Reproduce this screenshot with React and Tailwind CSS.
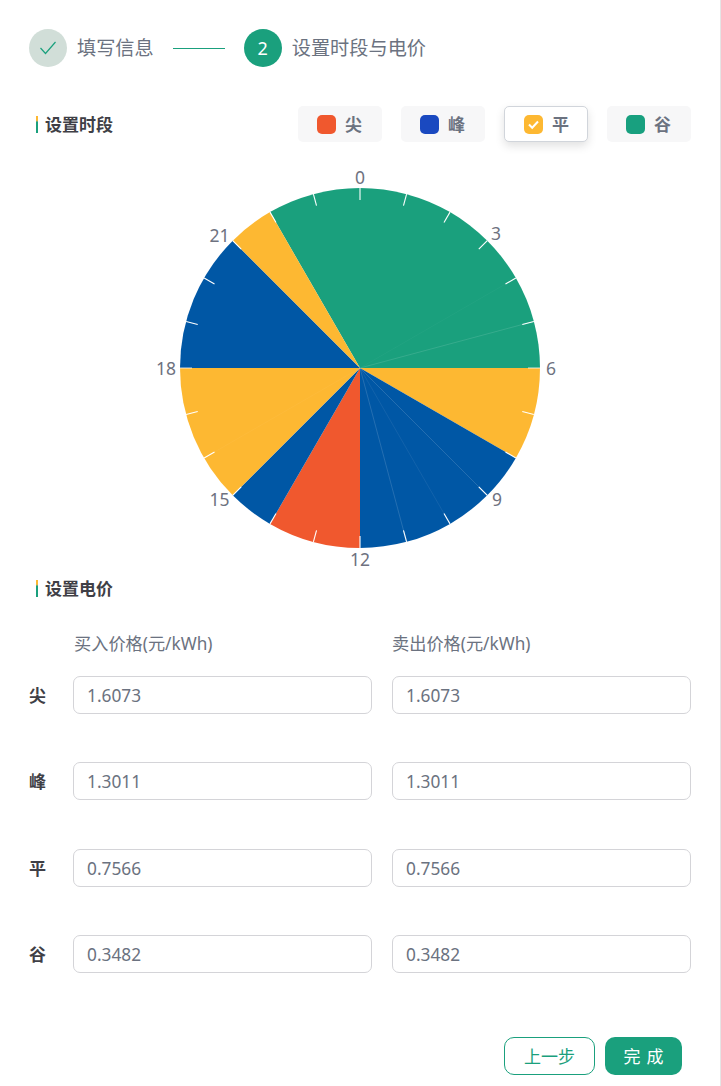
const CJK = '"Noto Sans", "Noto Sans CJK SC", sans-serif';

const C = 360, Y = 368, R = 180;
const pt = (deg, r) => {
  const a = (deg * Math.PI) / 180;
  return [C + r * Math.sin(a), Y - r * Math.cos(a)];
};
const sector = (a, b) => {
  const [x1, y1] = pt(a, R);
  const [x2, y2] = pt(b, R);
  return `M${C} ${Y}L${x1} ${y1}A${R} ${R} 0 ${b - a > 180 ? 1 : 0} 1 ${x2} ${y2}Z`;
};

const GREEN = '#1aa07d', YELLOW = '#fdb832', BLUE = '#0057a5', RED = '#f0582e';
const sectors = [
  [-30, 90, GREEN],
  [90, 120, YELLOW],
  [120, 180, BLUE],
  [180, 210, RED],
  [210, 225, BLUE],
  [225, 270, YELLOW],
  [270, 315, BLUE],
  [315, 330, YELLOW],
];
const seams = [[60, 0.03], [75, 0.12], [135, 0.14], [150, 0.07], [165, 0.14], [240, 0.04]];
const labels = [
  ['0', 360, 177], ['3', 496, 233], ['6', 551, 368], ['9', 497, 499],
  ['12', 360, 559], ['15', 219.5, 499], ['18', 166, 368], ['21', 219.5, 235],
];

function Pie() {
  return (
    <svg width="720" height="414" viewBox="0 158 720 414" className="block -ml-[29px] mt-[16px]">
      {sectors.map(([a, b, c]) => (
        <path key={a} d={sector(a, b)} fill={c} />
      ))}
      {seams.map(([a, o]) => {
        const [x, y] = pt(a, R);
        return <line key={a} x1={C} y1={Y} x2={x} y2={y} stroke="#fff" strokeOpacity={o} strokeWidth="1" />;
      })}
      {Array.from({ length: 24 }, (_, i) => {
        const [x1, y1] = pt(i * 15, R);
        const [x2, y2] = pt(i * 15, R - 12);
        return <line key={i} x1={x1} y1={y1} x2={x2} y2={y2} stroke="#fff" strokeOpacity={i % 6 === 0 && i % 12 !== 0 ? 0.7 : 1} strokeWidth="1.1" />;
      })}
      {labels.map(([t, x, y]) => (
        <text key={t} x={x} y={y} fill="#6e7280" fontSize="17.5" textAnchor="middle" dominantBaseline="central" style={{ fontFamily: CJK }}>
          {t}
        </text>
      ))}
    </svg>
  );
}

function Heading({ children, className = '' }) {
  return (
    <div className={`flex items-center h-[24px] pl-[7px] ${className}`}>
      <span className="w-[2px] h-[17px] bg-gradient-to-b from-[#fdb832] from-[25%] to-[#1aa07d] to-[35%]" />
      <span className="ml-[7px] text-[17px] font-bold text-[#3f3f46] leading-none">{children}</span>
    </div>
  );
}

function Chip({ label, color, selected }) {
  return (
    <div className={`w-[84px] h-[36px] rounded-[5px] flex items-center pl-[19px] ${selected ? 'bg-white border border-[#d1d5db] shadow-[0_4px_10px_rgba(0,0,0,0.12)]' : 'bg-[#f7f7f8]'}`}>
      <span className="w-[19px] h-[19px] rounded-[5px] flex items-center justify-center" style={{ background: color }}>
        {selected && (
          <svg width="13" height="13" viewBox="0 0 13 13" fill="none">
            <path d="M2 6.5 L5.2 9.8 L11 3.5" stroke="#fff" strokeWidth="2" />
          </svg>
        )}
      </span>
      <span className="ml-[9px] pt-px text-[17px] font-bold text-[#6b7280] leading-none">{label}</span>
    </div>
  );
}

function PriceBox({ value }) {
  return (
    <div className="w-[299px] h-[38px] rounded-[7px] border border-[#d4d4d8] pl-[13px] pt-px flex items-center text-[17.3px] text-[#6b7280] bg-white">
      {value}
    </div>
  );
}

const rows = [
  ['尖', '1.6073', 'h-[86px]'],
  ['峰', '1.3011', 'h-[87px]'],
  ['平', '0.7566', 'h-[86px]'],
  ['谷', '0.3482', 'h-[38px]'],
];

export default function App() {
  return (
    <div className="relative w-[721px] h-[1086px] bg-white border-r border-[#e5e5e5] pl-[29px] pr-[29px] pt-[29px] overflow-hidden" style={{ fontFamily: CJK }}>
      <div className="flex items-center h-[38px]">
        <span className="w-[38px] h-[38px] rounded-full bg-[#d1ded8] flex items-center justify-center">
          <svg width="18" height="14" viewBox="0 0 18 14" fill="none">
            <path d="M1.5 7 L6.5 12.5 L16.5 1" stroke="#1aa07d" strokeWidth="1.2" />
          </svg>
        </span>
        <span className="ml-[10px] text-[19.2px] text-[#6b7280] leading-none">填写信息</span>
        <span className="ml-[19px] w-[52px] h-px bg-[#1aa07d]" />
        <span className="ml-[19px] w-[38px] h-[38px] rounded-full bg-[#1aa07d] flex items-center justify-center text-white text-[18px]">2</span>
        <span className="ml-[10px] text-[19.2px] text-[#6b7280] leading-none">设置时段与电价</span>
      </div>

      <div className="flex items-center justify-between mt-[39px] h-[36px]">
        <Heading>设置时段</Heading>
        <div className="flex gap-[19px]">
          <Chip label="尖" color={RED} />
          <Chip label="峰" color="#1a49c0" />
          <Chip label="平" color={YELLOW} selected />
          <Chip label="谷" color="#18a07f" />
        </div>
      </div>

      <Pie />

      <Heading className="mt-[4px]">设置电价</Heading>

      <div className="flex mt-[31px] pl-[44px] gap-[20px] text-[17.2px] text-[#6b7280] h-[26px] items-center leading-none">
        <span className="w-[299px] pl-px">买入价格(元/kWh)</span>
        <span className="w-[299px]">卖出价格(元/kWh)</span>
      </div>

      <div className="mt-[19px]">
        {rows.map(([k, v, h]) => (
          <div key={k} className={`flex items-start ${h}`}>
            <span className="w-[44px] h-[38px] flex items-center text-[17px] font-bold text-[#3f3f46] leading-none">{k}</span>
            <div className="flex gap-[20px]">
              <PriceBox value={v} />
              <PriceBox value={v} />
            </div>
          </div>
        ))}
      </div>

      <div className="flex justify-end gap-[10px] mt-[64px] pr-[9px]">
        <div className="w-[91px] h-[38px] rounded-[10px] border border-[#1aa07d] bg-white text-[#1aa07d] text-[17px] flex items-center justify-center leading-none">上一步</div>
        <div className="w-[77px] h-[38px] rounded-[10px] bg-[#1aa07d] text-white text-[17px] flex items-center justify-center leading-none tracking-[6px] pl-[6px]">完成</div>
      </div>
    </div>
  );
}
